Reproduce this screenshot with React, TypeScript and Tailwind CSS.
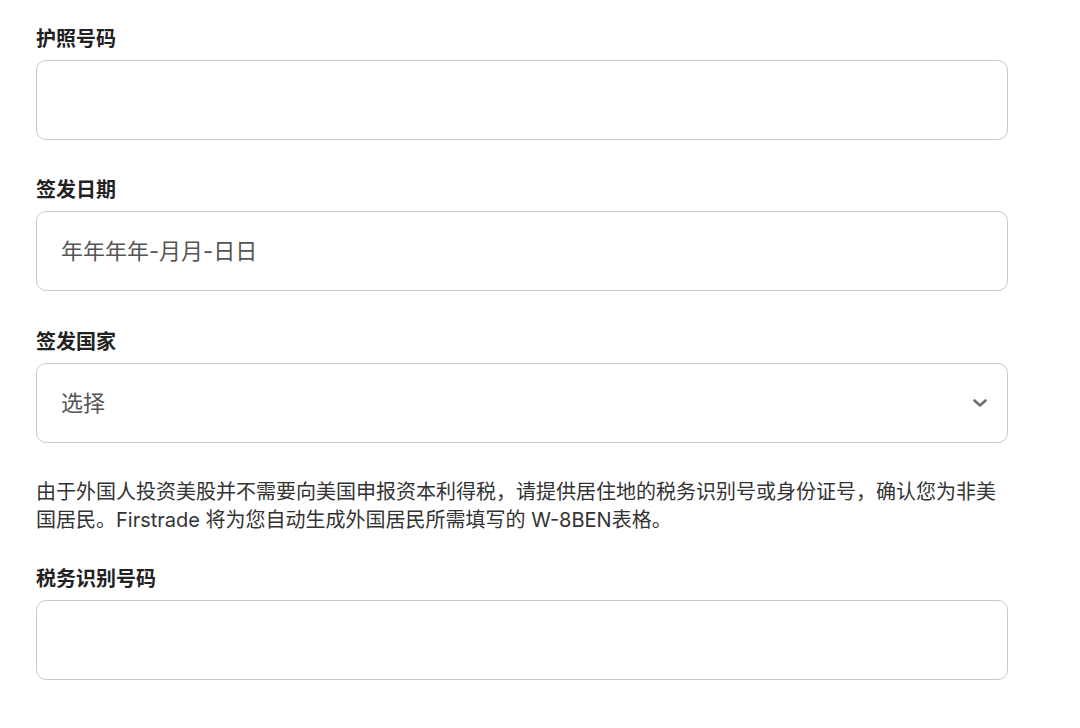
import React from 'react';

const font = { fontFamily: 'Inter, "Noto Sans CJK SC", sans-serif' };

function Field({ label, children, className = '' }: { label: string; children?: React.ReactNode; className?: string }) {
  return (
    <div className={className}>
      <div className="text-[20px] leading-[28px] font-bold text-[#222]">{label}</div>
      <div className="mt-[7px] h-[80px] rounded-[10px] border border-[#c8c8c8] bg-white flex items-center px-6 text-[22px] text-[#555]">
        {children}
      </div>
    </div>
  );
}

export default function App() {
  return (
    <div className="min-h-[728px] w-[1080px] bg-white" style={font}>
      <div className="w-[972px] ml-[36px] pt-[25px] flex flex-col">
        <Field label="护照号码" />
        <Field label="签发日期" className="mt-[36px]">
          年年年年-月月-日日
        </Field>
        <Field label="签发国家" className="mt-[37px]">
          <span className="flex-1">选择</span>
          <svg width="16" height="10" viewBox="0 0 16 10" className="mr-[-5px]">
            <path d="M2.5 2.5l5.5 5 5.5-5" fill="none" stroke="#6f6f6f" strokeWidth="2.6" strokeLinecap="round" strokeLinejoin="round" />
          </svg>
        </Field>
        <p className="mt-[35px] text-[20px] leading-[28px] text-[#333]">
          由于外国人投资美股并不需要向美国申报资本利得税，请提供居住地的税务识别号或身份证号，确认您为非美国居民。Firstrade 将为您自动生成外国居民所需填写的 W-8BEN表格。
        </p>
        <Field label="税务识别号码" className="mt-[31px]" />
      </div>
    </div>
  );
}
